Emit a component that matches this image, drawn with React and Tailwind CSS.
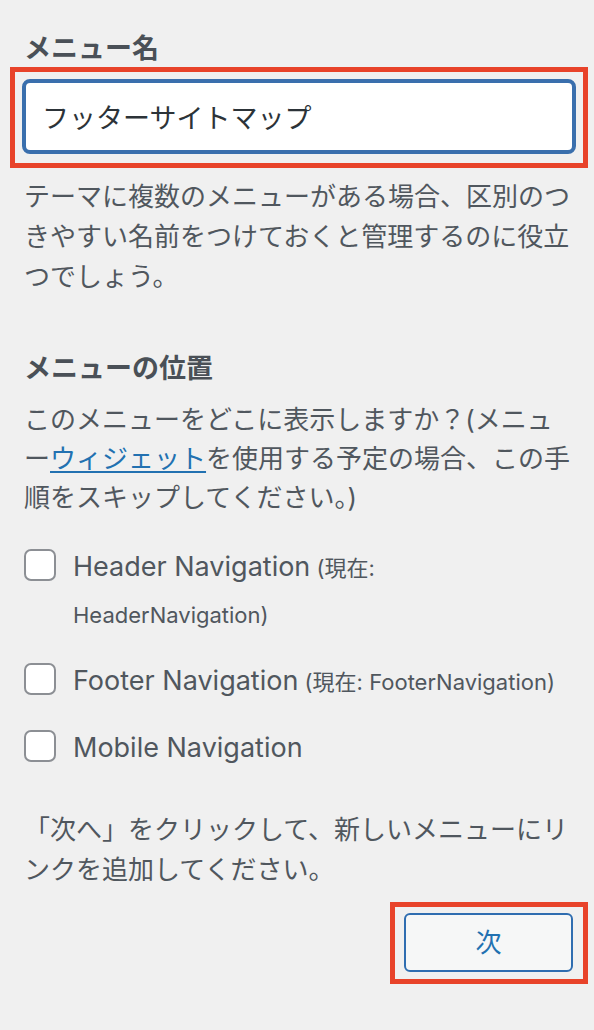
import React from "react";

const font = { fontFamily: 'Inter, "Noto Sans CJK JP", sans-serif' };

const locations = [
  { id: "header", name: "Header Navigation", current: "HeaderNavigation", wrap: true },
  { id: "footer", name: "Footer Navigation", current: "FooterNavigation" },
  { id: "mobile", name: "Mobile Navigation" },
];

const App = () => {
  return (
    <div
      className="min-h-screen w-full bg-[#f0f0f0] px-[24px] pt-[31px] text-[#50575e]"
      style={font}
    >
      <h3 className="text-[27px] font-bold leading-[36px] text-[#4a5057]">メニュー名</h3>

      {/* annotated input */}
      <div className="-ml-[14px] -mr-[18px] border-[5px] border-[#e8432a] px-[7px] pt-[7px] pb-[9px]">
        <input
          type="text"
          defaultValue="フッターサイトマップ"
          className="h-[75px] w-full rounded-[8px] border-[4px] border-[#3a6fad] bg-white px-[16px] text-[27px] text-[#2c3338] outline-none"
          style={font}
        />
      </div>

      <p className="mt-[9px] -mr-[16px] text-[26px] leading-[40px]">
        テーマに複数のメニューがある場合、区別のつ<br />
        きやすい名前をつけておくと管理するのに役立<br />
        つでしょう。
      </p>

      <h3 className="mt-[54px] text-[27px] font-bold leading-[36px] text-[#4a5057]">メニューの位置</h3>
      <p className="mt-[13px] -mr-[16px] text-[26px] leading-[39px]">
        このメニューをどこに表示しますか？(メニュ<br />
        ー
        <a href="#" className="text-[#2271b1] underline decoration-2 underline-offset-[3px]">
          ウィジェット
        </a>
        を使用する予定の場合、この手<br />
        順をスキップしてください。)
      </p>

      <div className="mt-[26px] flex flex-col gap-[20px]">
        {locations.map((loc) => (
          <label key={loc.id} className="flex items-start gap-[17px]">
            <input
              type="checkbox"
              className="mt-[6px] h-[32px] w-[32px] shrink-0 appearance-none rounded-[7px] border-2 border-[#8c8f94] bg-white"
            />
            <span className="-mr-[20px] text-[27px] leading-[47px] text-[#50575e]">
              {loc.name}
              {loc.current && (
                <span className="text-[22px] leading-none">
                  {" "}(現在:{loc.wrap ? <br /> : " "}
                  {loc.current})
                </span>
              )}
            </span>
          </label>
        ))}
      </div>

      <p className="mt-[39px] -mr-[16px] text-[26px] leading-[40px]">
        「次へ」をクリックして、新しいメニューにリ<br />
        ンクを追加してください。
      </p>

      <div className="mt-[12px] flex justify-end">
        <div className="-mr-[18px] border-[5px] border-[#e8432a] pt-[6px] pr-[10px] pb-[7px] pl-[9px]">
          <button
            className="flex h-[59px] w-[169px] items-center justify-center rounded-[6px] border-2 border-[#2f6db0] bg-[#f6f7f7] text-[26px] text-[#2271b1]"
            style={font}
          >
            次
          </button>
        </div>
      </div>
    </div>
  );
};

export default App;
